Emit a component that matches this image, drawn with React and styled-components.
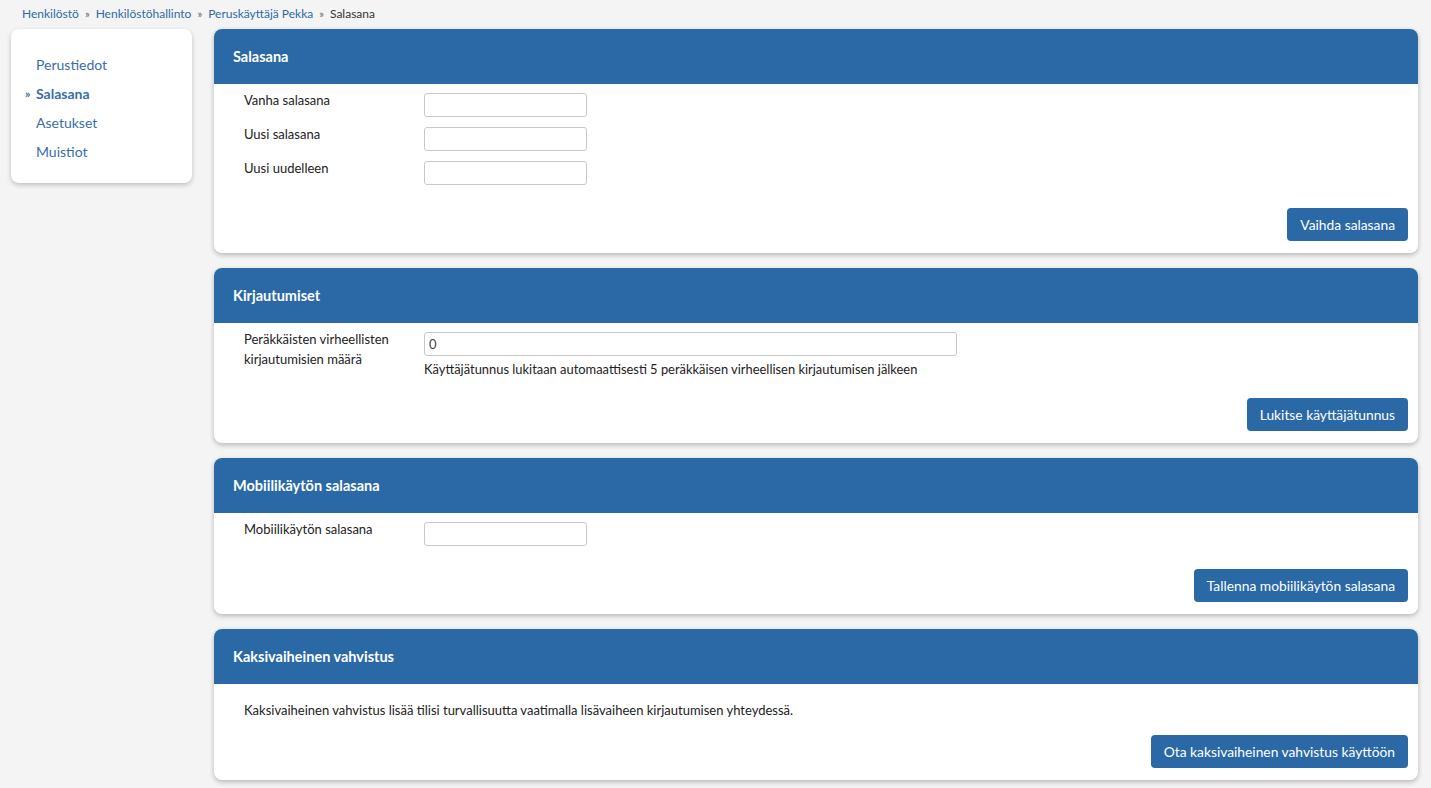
import React from "react";
import styled, { createGlobalStyle } from "styled-components";

const Global = createGlobalStyle`
  html, body { margin: 0; padding: 0; background: #f4f4f4; }
  body { font-family: Lato, "Liberation Sans", sans-serif; font-size: 13px; color: #222; }
  * { box-sizing: border-box; }
`;

const BLUE = "#2a69a5";

const Page = styled.div`
  padding: 0 13px 8px 11px;
`;

const Crumbs = styled.nav`
  display: flex;
  align-items: center;
  height: 29px;
  padding-left: 11px;
  padding-bottom: 2px;
  font-size: 12px;
  gap: 6px;
`;

const Crumb = styled.a`
  color: ${p => (p.$current ? "#333" : "#2f6aa6")};
  text-decoration: none;
`;

const Sep = styled.span`
  color: #666;
  font-size: 11px;
`;

const Layout = styled.div`
  display: grid;
  grid-template-columns: 181px 1fr;
  gap: 22px;
  align-items: start;
`;

const Side = styled.aside`
  background: #fff;
  border-radius: 8px;
  box-shadow: 0 2px 5px rgba(0, 0, 0, 0.22);
  padding: 21px 0 17px 0;
  display: flex;
  flex-direction: column;
`;

const SideItem = styled.a`
  position: relative;
  display: block;
  padding-left: 25px;
  line-height: 29px;
  font-size: 14px;
  color: #3a6ea8;
  font-weight: ${p => (p.$active ? 700 : 400)};
  text-decoration: none;
  &::before {
    content: "»";
    position: absolute;
    left: 14px;
    font-weight: 700;
    font-size: 12px;
    display: ${p => (p.$active ? "block" : "none")};
  }
`;

const Main = styled.main`
  display: flex;
  flex-direction: column;
  gap: 15px;
`;

const Card = styled.section`
  background: #fff;
  border-radius: 8px;
  box-shadow: 0 2px 5px rgba(0, 0, 0, 0.25);
  overflow: hidden;
`;

const CardHeader = styled.h2`
  margin: 0;
  height: 55px;
  display: flex;
  align-items: center;
  padding-left: 19px;
  background: ${BLUE};
  color: #fff;
  font-size: 14.5px;
  font-weight: 700;
`;

const CardBody = styled.div`
  padding: ${p => p.$top || 9}px 10px 12px 30px;
  display: flex;
  flex-direction: column;
`;

const Rows = styled.div`
  display: flex;
  flex-direction: column;
  gap: 10px;
`;

const Row = styled.div`
  display: grid;
  grid-template-columns: 180px 1fr;
  align-items: start;
`;

const Label = styled.label`
  margin-top: -3px;
  line-height: 20px;
  font-size: 13px;
  color: #222;
`;

const Field = styled.div`
  display: flex;
  flex-direction: column;
`;

const Input = styled.input`
  width: ${p => p.$w || 163}px;
  height: 24px;
  border: 1px solid #c8c8c8;
  border-radius: 3px;
  padding: 0 4px;
  font-family: inherit;
  font-size: 13px;
  color: #444;
  background: #fff;
`;

const Help = styled.div`
  margin-top: 3px;
  line-height: 20px;
  font-size: 12.9px;
  color: #222;
`;

const Text = styled.p`
  margin: 0;
  line-height: 20px;
  font-size: 13px;
`;

const Actions = styled.div`
  display: flex;
  justify-content: flex-end;
  margin-top: ${p => p.$mt}px;
`;

const Button = styled.button`
  height: 33px;
  padding: 0 13px;
  background: ${BLUE};
  color: #fff;
  border: none;
  border-radius: 4px;
  font-family: inherit;
  font-size: 13.8px;
  cursor: pointer;
`;

export default function App() {
  return (
    <Page>
      <Global />
      <Crumbs>
        <Crumb href="#">Henkilöstö</Crumb>
        <Sep>»</Sep>
        <Crumb href="#">Henkilöstöhallinto</Crumb>
        <Sep>»</Sep>
        <Crumb href="#">Peruskäyttäjä Pekka</Crumb>
        <Sep>»</Sep>
        <Crumb $current>Salasana</Crumb>
      </Crumbs>
      <Layout>
        <Side>
          <SideItem href="#">Perustiedot</SideItem>
          <SideItem href="#" $active>Salasana</SideItem>
          <SideItem href="#">Asetukset</SideItem>
          <SideItem href="#">Muistiot</SideItem>
        </Side>
        <Main>
          <Card>
            <CardHeader>Salasana</CardHeader>
            <CardBody>
              <Rows>
                <Row>
                  <Label>Vanha salasana</Label>
                  <Input type="password" />
                </Row>
                <Row>
                  <Label>Uusi salasana</Label>
                  <Input type="password" />
                </Row>
                <Row>
                  <Label>Uusi uudelleen</Label>
                  <Input type="password" />
                </Row>
              </Rows>
              <Actions $mt={23}>
                <Button>Vaihda salasana</Button>
              </Actions>
            </CardBody>
          </Card>
          <Card>
            <CardHeader>Kirjautumiset</CardHeader>
            <CardBody>
              <Rows>
                <Row>
                  <Label>Peräkkäisten virheellisten kirjautumisien määrä</Label>
                  <Field>
                    <Input $w={533} defaultValue="0" />
                    <Help>Käyttäjätunnus lukitaan automaattisesti 5 peräkkäisen virheellisen kirjautumisen jälkeen</Help>
                  </Field>
                </Row>
              </Rows>
              <Actions $mt={19}>
                <Button>Lukitse käyttäjätunnus</Button>
              </Actions>
            </CardBody>
          </Card>
          <Card>
            <CardHeader>Mobiilikäytön salasana</CardHeader>
            <CardBody>
              <Rows>
                <Row>
                  <Label>Mobiilikäytön salasana</Label>
                  <Input type="password" />
                </Row>
              </Rows>
              <Actions $mt={23}>
                <Button>Tallenna mobiilikäytön salasana</Button>
              </Actions>
            </CardBody>
          </Card>
          <Card>
            <CardHeader>Kaksivaiheinen vahvistus</CardHeader>
            <CardBody $top={16}>
              <Text>Kaksivaiheinen vahvistus lisää tilisi turvallisuutta vaatimalla lisävaiheen kirjautumisen yhteydessä.</Text>
              <Actions $mt={15}>
                <Button>Ota kaksivaiheinen vahvistus käyttöön</Button>
              </Actions>
            </CardBody>
          </Card>
        </Main>
      </Layout>
    </Page>
  );
}
